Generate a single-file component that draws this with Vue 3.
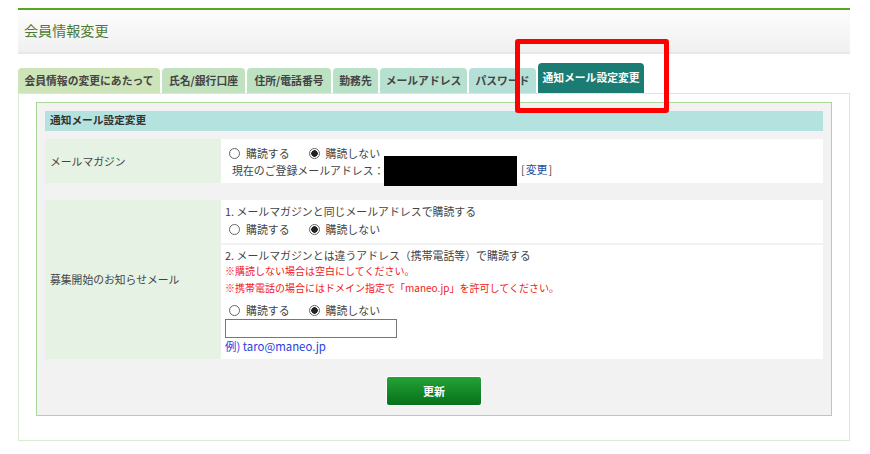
<script setup>
const tabs = [
  { label: '会員情報の変更にあたって', w: 142, bg: '#cde3b8' },
  { label: '氏名/銀行口座', w: 83, bg: '#c2e2bf' },
  { label: '住所/電話番号', w: 84, bg: '#bde2c2' },
  { label: '勤務先', w: 45, bg: '#b8e1c8' },
  { label: 'メールアドレス', w: 87, bg: '#b6e1d0' },
  { label: 'パスワード', w: 67, bg: '#b4e0d8' },
]
</script>

<template>
  <div class="page">
    <header class="head">会員情報変更</header>
    <nav class="tabs">
      <a v-for="t in tabs" :key="t.label" class="tab" :style="{ width: t.w + 'px', background: t.bg }">{{ t.label }}</a>
      <a class="tab active">通知メール設定変更</a>
    </nav>
    <div class="panel">
      <div class="inner">
        <h2 class="title">通知メール設定変更</h2>

        <section class="row first">
          <div class="label">メールマガジン</div>
          <div class="cells">
            <div class="cell mag">
              <div class="radios">
                <label><input type="radio" name="a" />購読する</label>
                <label><input type="radio" name="a" checked />購読しない</label>
              </div>
              <div class="addr">現在のご登録メールアドレス：<span class="masked"></span><span class="change">[<a>変更</a>]</span></div>
            </div>
          </div>
        </section>

        <section class="row second">
          <div class="label long">募集開始のお知らせメール</div>
          <div class="cells">
            <div class="cell one">
              <div>1. メールマガジンと同じメールアドレスで購読する</div>
              <div class="radios r1">
                <label><input type="radio" name="b" />購読する</label>
                <label><input type="radio" name="b" checked />購読しない</label>
              </div>
            </div>
            <div class="cell two">
              <div class="lead">2. メールマガジンとは違うアドレス（携帯電話等）で購読する</div>
              <div class="red">※購読しない場合は空白にしてください。</div>
              <div class="red">※携帯電話の場合にはドメイン指定で「maneo.jp」を許可してください。</div>
              <div class="radios r3">
                <label><input type="radio" name="c" />購読する</label>
                <label><input type="radio" name="c" checked />購読しない</label>
              </div>
              <input class="text" type="text" />
              <div class="eg">例) taro@maneo.jp</div>
            </div>
          </div>
        </section>

        <div class="actions"><button class="btn">更新</button></div>
      </div>
    </div>
    <div class="mark"></div>
  </div>
</template>

<style scoped>
.page {
  position: relative;
  width: 832px;
  height: 454px;
  margin-left: 18px;
  padding-top: 8px;
  box-sizing: border-box;
  font-family: "Noto Sans CJK JP", "Noto Sans", sans-serif;
  font-size: 10.9px;
  color: #444;
}
.head {
  height: 42px;
  border-top: 2px solid #5aa51e;
  border-bottom: 2px solid #e8e8e8;
  background: linear-gradient(#fdfdfd, #f0f0f0);
  box-sizing: content-box;
  padding-left: 6px;
  font-size: 14.1px;
  line-height: 41px;
  color: #4c7a35;
}
.tabs {
  display: flex;
  align-items: flex-end;
  gap: 2px;
  height: 39px;
}
.tab {
  height: 25px;
  box-sizing: border-box;
  border-radius: 4px 4px 0 0;
  text-align: center;
  font-size: 10.8px;
  font-weight: 700;
  line-height: 25px;
  color: #444;
  white-space: nowrap;
}
.active {
  width: 106px;
  height: 30px;
  line-height: 29px;
  background: #1a7c72;
  color: #fff;
}
.panel {
  height: 348px;
  box-sizing: border-box;
  border: 1px solid #d9ebd0;
  padding: 8px 17px;
}
.inner {
  height: 314px;
  box-sizing: border-box;
  border: 1px solid #a9d79a;
  background: #f2f2f2;
  padding: 8px;
}
.title {
  margin: 0;
  height: 20px;
  background: #b4e2df;
  padding-left: 5px;
  font-size: 10.7px;
  font-weight: 700;
  line-height: 18px;
  color: #333;
}
.row {
  display: flex;
}
.first {
  margin-top: 8px;
  height: 44px;
}
.second {
  margin-top: 17px;
  height: 159px;
}
.label {
  width: 176px;
  flex: none;
  display: flex;
  align-items: center;
  padding-left: 5px;
  box-sizing: border-box;
  background: #e6f2e3;
  font-size: 10.8px;
}
.long {
  padding-bottom: 2px;
}
.cells {
  flex: 1;
  display: flex;
  flex-direction: column;
  gap: 2px;
}
.cell {
  background: #fff;
  padding-left: 4px;
  line-height: 15px;
}
.mag {
  flex: 1;
  padding-top: 7px;
}
.one {
  height: 43px;
  box-sizing: border-box;
  padding-top: 4px;
}
.r1 {
  margin-top: 3px;
}
.two {
  flex: 1;
  padding-top: 3px;
}
.lead {
  line-height: 14px;
}
.radios {
  display: flex;
  gap: 19px;
  padding-left: 4px;
}
.radios label {
  display: flex;
  align-items: center;
  gap: 6px;
}
input[type="radio"] {
  appearance: none;
  width: 11px;
  height: 11px;
  margin: 0;
  border: 1px solid #666;
  border-radius: 50%;
  background: #fff;
  box-sizing: border-box;
}
input[type="radio"]:checked {
  background: radial-gradient(circle, #222 0 3px, #fff 3.5px);
}
.addr {
  display: flex;
  align-items: center;
  height: 15px;
  margin-top: 2px;
  padding-left: 7px;
}
.masked {
  position: absolute;
  left: 366px;
  top: 156px;
  width: 133px;
  height: 30px;
  background: #000;
}
.change {
  position: absolute;
  left: 503px;
  top: 162px;
}
.change a {
  padding: 0 1px;
  color: #1d4f9e;
}
.red {
  color: #f02020;
  font-size: 10px;
  line-height: 17px;
}
.r3 {
  margin-top: 7px;
}
.text {
  display: block;
  width: 172px;
  height: 19px;
  box-sizing: border-box;
  margin: 1px 0 0;
  border: 1px solid #777;
  background: #fff;
}
.eg {
  margin-top: 1px;
  font-size: 11.4px;
  color: #2a3ee0;
  line-height: 15px;
}
.actions {
  display: flex;
  justify-content: center;
  margin-top: 17px;
}
.btn {
  width: 96px;
  height: 30px;
  border: 1px solid #fff;
  border-radius: 3px;
  background: linear-gradient(#24a335, #08701a);
  color: #fff;
  font-family: inherit;
  font-size: 11px;
  font-weight: 700;
}
.mark {
  position: absolute;
  left: 497px;
  top: 39px;
  width: 154px;
  height: 74px;
  box-sizing: border-box;
  border: 5px solid #f00;
  border-radius: 3px;
}
</style>
